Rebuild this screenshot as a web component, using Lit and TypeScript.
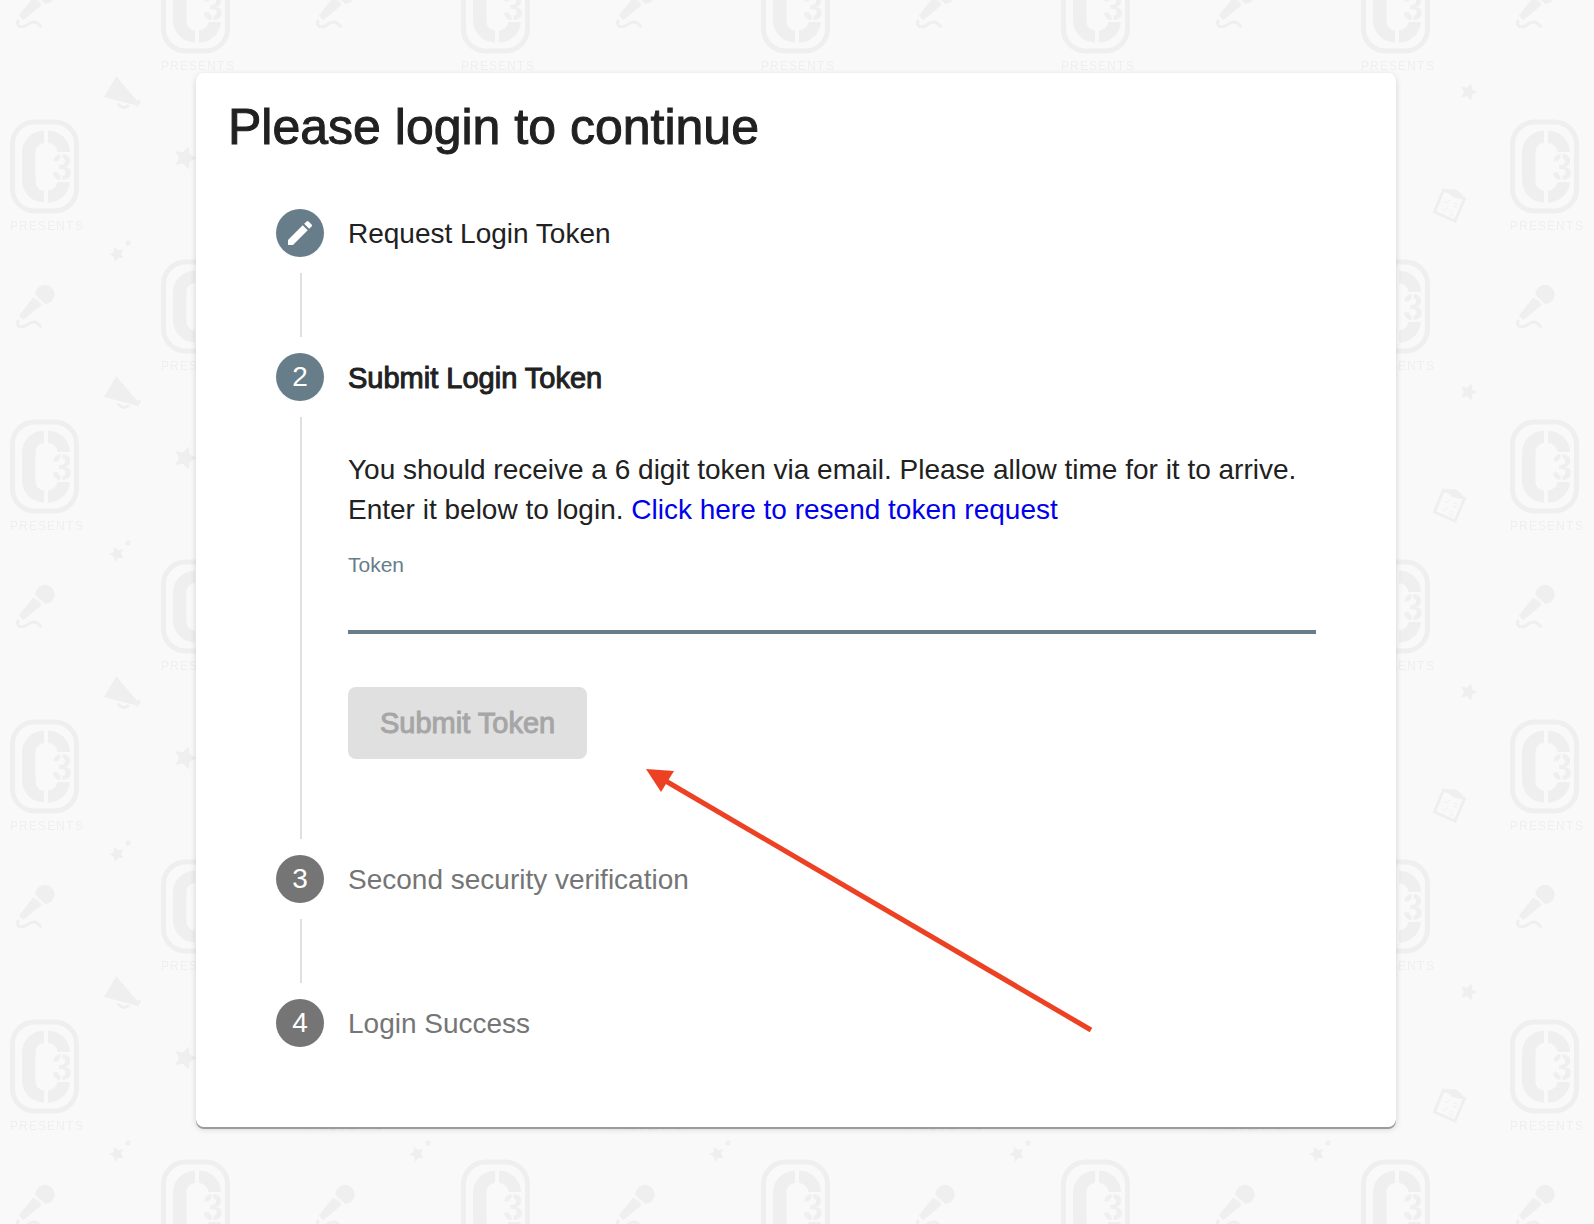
import { LitElement, html, svg, css, nothing } from "lit";
import { customElement, property, state } from "lit/decorators.js";

const logo = (x: number, y: number) => svg`
  <g transform="translate(${x} ${y})">
    <rect class="ring" x="2.5" y="2.5" width="64" height="89" rx="22" />
    <path class="fill" d="M34 11V23.5A9 9 0 0 0 25.5 32.5V62A9 9 0 0 0 34 71V83A22 22 0 0 1 12 61V33A22 22 0 0 1 34 11Z" />
    <path class="fill" d="M38 11A22 22 0 0 1 60 32.5H47.5A10 10 0 0 0 38 23.5Z" />
    <path class="fill" d="M38 83A22 22 0 0 0 60 62.5H47.5A10 10 0 0 1 38 71Z" />
    <text class="three" x="42" y="60">3</text>
    <path class="gap" d="M51.500 33V40M51.500 54V62" />
    <text class="presents" x="0 9 19 28 37 46 56 65" y="110">PRESENTS</text>
  </g>`;

const star = (x: number, y: number, r: number, turn: number) => {
  const points = Array.from({ length: 10 }, (_, i) => {
    const radius = i % 2 ? r * 0.5 : r;
    const angle = ((turn + i * 36) * Math.PI) / 180;
    return `${(x + radius * Math.cos(angle)).toFixed(1)},${(y + radius * Math.sin(angle)).toFixed(1)}`;
  }).join(" ");
  return svg`<polygon class="fill" points=${points} />`;
};

@customElement("tour-wallpaper")
class TourWallpaper extends LitElement {
  static styles = css`
    :host { display: block; }
    svg { display: block; width: 100%; height: 100%; }
    .fill { fill: #efefef; }
    .ring, .board, .cord, .marks { fill: none; stroke: #efefef; }
    .ring { stroke-width: 5px; }
    .board { stroke-width: 3px; }
    .cord { stroke-width: 3px; stroke-linecap: round; }
    .marks { stroke-width: 1px; }
    .gap { fill: none; stroke: #f9f9f9; stroke-width: 2px; }
    .three { fill: #efefef; font: bold 36px "Liberation Sans", sans-serif; }
    .presents { fill: #efefef; font: 12px "Liberation Sans", sans-serif; }
  `;

  render() {
    return html`<svg aria-hidden="true">
      <defs>
        <pattern id="tile" y="-64" width="300" height="300" patternUnits="userSpaceOnUse">
          <g transform="translate(0 -236)">
            ${star(117, 254, 8, -40)} ${star(128, 243, 4, -20)}
            <circle class="fill" cx="45" cy="294.5" r="9.7" />
            <path class="gap" d="M33 294L46 306" />
            <path class="fill" d="M33.3 297.3L41.7 305L23.3 320L18.7 315.7Z" />
            <path class="cord" d="M18 321C16.5 326 20 327.5 24 326.5C28 325 30 321.5 34 322Q38 322.5 40.5 326.5" />
            ${logo(161, 259.5)}
            <path class="fill" d="M116.3 376.3L136 399.5L138 401L139 399.5L141.3 401L137.5 407L134.5 405L104 397Z" />
            <path class="cord" d="M118.5 404.5Q123 409.5 128 406" />
            ${logo(10, 419.5)}
            ${star(185, 458, 12, 0)} ${star(268.5, 392, 9, 0)}
            <path class="board" d="M243.5 490L264.5 498.5L255 521L234.5 512Z" />
            <path class="fill" d="M246 488.5L251 489.5Q256 487.5 259 492L263 495L260 499L252 497Z" />
            <path class="marks" d="M244 501L246 503L250 500M242 508.5L244 511L248 507.5M254 503L258 504.5M253 506L257 507.5M250 511L254 512.5M249 514L253 515.5" />
          </g>
        </pattern>
      </defs>
      <rect width="100%" height="100%" fill="url(#tile)" />
    </svg>`;
  }
}

@customElement("stepper-step")
class StepperStep extends LitElement {
  @property() label = "";
  @property({ type: Number }) number = 1;
  @property() status = "upcoming";
  @property({ type: Boolean }) last = false;

  static styles = css`
    :host { display: block; }
    .header { display: flex; align-items: center; gap: 24px; height: 48px; color: #757575; }
    .badge {
      display: flex; align-items: center; justify-content: center;
      width: 48px; height: 48px; border-radius: 50%;
      background: #757575; color: #fff;
    }
    .badge svg { width: 32px; height: 32px; fill: currentColor; }
    .label { padding-top: 2px; }
    .done, .current { color: #212121; }
    .done .badge, .current .badge { background: #677d89; }
    .current .label { font-size: 29px; -webkit-text-stroke: 1px currentColor; }
    .body { min-height: 64px; margin: 16px 0 16px 24px; padding-left: 46px; border-left: 2px solid #e0e0e0; }
  `;

  render() {
    return html`
      <div class="header ${this.status}">
        <span class="badge">
          ${this.status === "done"
            ? html`<svg viewBox="0 0 24 24" aria-hidden="true"><path d="M3 17.25V21h3.75L17.81 9.94l-3.75-3.75L3 17.25zM20.71 7.04a1 1 0 0 0 0-1.41l-2.34-2.34a1 1 0 0 0-1.41 0l-1.83 1.83 3.75 3.75 1.83-1.83z" /></svg>`
            : this.number}
        </span>
        <span class="label">${this.label}</span>
      </div>
      ${this.last ? nothing : html`<div class="body"><slot></slot></div>`}
    `;
  }
}

@customElement("app-root")
class AppRoot extends LitElement {
  @state() private token = "";

  static styles = css`
    :host {
      display: block; position: relative; box-sizing: border-box; min-height: 100vh;
      padding: 73px 198px 97px 196px; background: #f9f9f9; color: #212121;
      font: 28px/40px "Liberation Sans", Arial, sans-serif;
    }
    .wallpaper { position: absolute; inset: 0; }
    .card {
      position: relative; background: #fff; border-radius: 8px;
      box-shadow: 0 2px 0 #9b9b9b, 0 2px 6px rgba(0, 0, 0, 0.16);
    }
    .title {
      margin: 0; padding: 24px 32px 52px;
      font-size: 50px; line-height: 60px; font-weight: normal;
      -webkit-text-stroke: 1px currentColor;
    }
    .steps { padding: 0 80px 80px; }
    .form { padding: 33px 0 80px; }
    .hint { margin: 0 0 23px; }
    .link { color: #00e; text-decoration: none; }
    .field-label { display: block; font-size: 21px; line-height: 24px; color: #677d89; }
    .field {
      display: block; box-sizing: border-box; width: 100%; height: 57px; padding: 0;
      border: 0; border-bottom: 4px solid #677d89; border-radius: 0; outline: 0;
      background: none; color: inherit; font: inherit;
    }
    .submit {
      display: block; height: 72px; margin-top: 53px; padding: 0 32px;
      border: 0; border-radius: 8px; background: #677d89; color: #fff;
      font: inherit; font-size: 29px; -webkit-text-stroke: 1px currentColor;
    }
    .submit:disabled { background: #e0e0e0; color: #a6a6a6; }
    .arrow { position: absolute; left: 450px; top: 696px; width: 448px; height: 266px; pointer-events: none; }
  `;

  private onInput(e: Event) {
    this.token = (e.target as HTMLInputElement).value;
  }

  render() {
    return html`
      <tour-wallpaper class="wallpaper"></tour-wallpaper>
      <main class="card">
        <h1 class="title">Please login to continue</h1>
        <div class="steps">
          <stepper-step number="1" status="done" label="Request Login Token"></stepper-step>
          <stepper-step number="2" status="current" label="Submit Login Token">
            <form class="form" @submit=${(e: Event) => e.preventDefault()}>
              <p class="hint">
                You should receive a 6 digit token via email. Please allow time for it to arrive.
                Enter it below to login. <a class="link" href="#resend">Click here to resend token request</a>
              </p>
              <label class="field-label" for="token">Token</label>
              <input class="field" id="token" autocomplete="one-time-code" .value=${this.token} @input=${this.onInput} />
              <button class="submit" ?disabled=${this.token.length !== 6}>Submit Token</button>
            </form>
          </stepper-step>
          <stepper-step number="3" label="Second security verification"></stepper-step>
          <stepper-step number="4" label="Login Success" last></stepper-step>
        </div>
        <svg class="arrow" viewBox="0 0 448 266" aria-hidden="true">
          <path d="M18 11L445 261" stroke="#ed4124" stroke-width="5" />
          <path d="M0 0L28 2L15 23Z" fill="#ed4124" />
        </svg>
      </main>
    `;
  }
}
